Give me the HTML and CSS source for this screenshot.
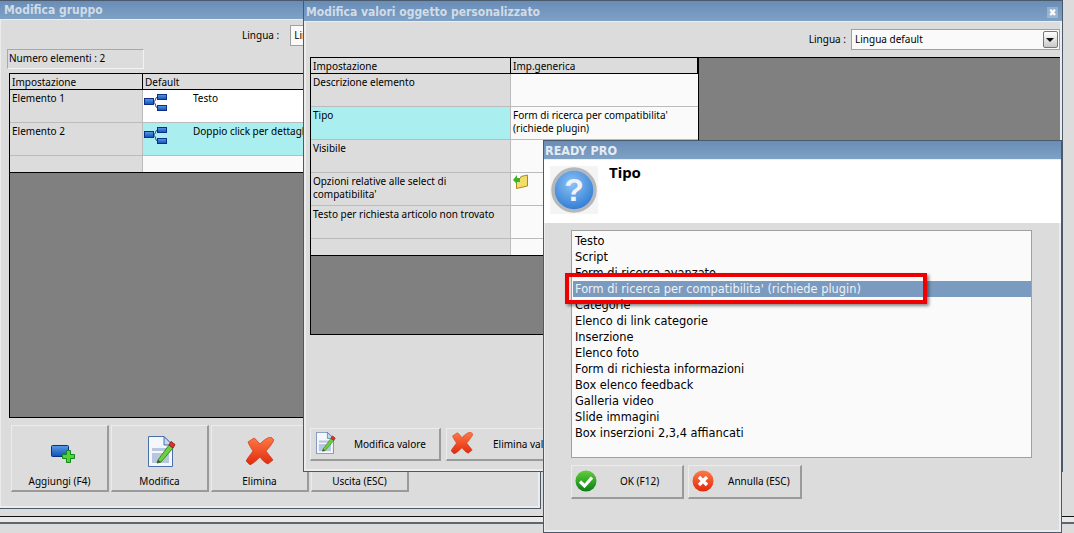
FILE: index.html
```html
<!DOCTYPE html>
<html lang="it">
<head>
<meta charset="utf-8">
<title>Ready Pro</title>
<link rel="stylesheet" href="styles.css">
</head>
<body>
<svg class="defs" width="0" height="0" aria-hidden="true">
  <defs>
    <linearGradient id="blue" x1="0" y1="0" x2="0" y2="1"><stop offset="0" stop-color="#5b9be8"/><stop offset="1" stop-color="#0f4fb5"/></linearGradient>
    <linearGradient id="redg" x1="0" y1="0" x2="0" y2="1"><stop offset="0" stop-color="#ff7a45"/><stop offset="1" stop-color="#e0290c"/></linearGradient>
    <linearGradient id="greeng" x1="0" y1="0" x2="0" y2="1"><stop offset="0" stop-color="#5fd03a"/><stop offset="1" stop-color="#0b7d16"/></linearGradient>
    <radialGradient id="qball" cx=".45" cy=".35" r=".75"><stop offset="0" stop-color="#8cc4f5"/><stop offset="1" stop-color="#1f6fce"/></radialGradient>
    <symbol id="tree" viewBox="0 0 23 17">
      <path d="M10 7.500 C12 7.500 11 3 13.500 3 M10 8.500 C12 8.500 11 14 13.500 14" fill="none" stroke="#2c3f78" stroke-width="1"/>
      <rect x=".5" y="4.500" width="9" height="6" fill="url(#blue)" stroke="#0b2f86"/>
      <rect x="13.500" y=".5" width="9" height="5" fill="url(#blue)" stroke="#0b2f86"/>
      <rect x="13.500" y="11.500" width="9" height="5" fill="url(#blue)" stroke="#0b2f86"/>
    </symbol>
    <symbol id="add" viewBox="0 0 25 20">
      <rect x=".5" y=".5" width="17" height="11" rx="1" fill="url(#blue)" stroke="#0b2f86"/>
      <path d="M15.500 5.500h4v4h4v4h-4v4h-4v-4h-4v-4h4z" fill="#57d13a" stroke="#118a1c"/>
    </symbol>
    <symbol id="edit" viewBox="0 0 28 31">
      <path d="M.5 .5H16L24.500 9V30.500H.5Z" fill="#f4f7fd" stroke="#4a70a8"/>
      <path d="M16 .5V9H24.500Z" fill="#c8d8f0" stroke="#4a70a8"/>
      <rect x="4" y="12" width="17" height="15" fill="#b9c6de"/>
      <rect x="4" y="15" width="13" height="2" fill="#f4f7fd"/>
      <path d="M10 24L21 9L25 12L13 26L9 27Z" fill="#6fd03f" stroke="#3b8a24"/>
      <path d="M21 9L23 5.500L27 8.500L25 12Z" fill="#d9352a" stroke="#93261c"/>
      <path d="M9 27L10 24L13 26Z" fill="#4b4b4b"/>
    </symbol>
    <symbol id="cross" viewBox="0 0 28 28">
      <path d="M2 5L8 1C10 2 12 5 14 7C17 4 20 1 25 0L28 3C26 7 23 11 20 14C22 17 25 20 27 23L22 27C19 26 16 23 14 20C11 23 8 26 4 28L0 24C2 20 5 17 7 14C5 11 3 8 2 5Z" fill="url(#redg)" stroke="#c4260c" stroke-width=".6"/>
    </symbol>
    <symbol id="ok" viewBox="0 0 22 22">
      <circle cx="11" cy="11" r="10.500" fill="url(#greeng)"/>
      <path d="M5 11.500L9.500 16L17 7.500" fill="none" stroke="#fff" stroke-width="3.200"/>
    </symbol>
    <symbol id="no" viewBox="0 0 22 22">
      <circle cx="11" cy="11" r="10.500" fill="url(#redg)"/>
      <path d="M7 7L15 15M15 7L7 15" fill="none" stroke="#fff" stroke-width="3.400"/>
    </symbol>
  </defs>
</svg>

<div class="strip"></div>

<section class="win win-group">
  <h1 class="title">Modifica gruppo</h1>
  <div class="body">
    <div class="lang lang-group">
      <span>Lingua :</span>
      <div class="select select-group">Lingua default</div>
    </div>
    <div class="count">Numero elementi : 2</div>
    <div class="grid-frame grid-frame-group">
      <div class="grid grid-group">
        <div class="cell head">Impostazione</div><div class="cell head">Default</div>
        <div class="cell name">Elemento 1</div>
        <div class="cell val treeval"><svg class="ic-tree"><use href="#tree"/></svg><span>Testo</span></div>
        <div class="cell name">Elemento 2</div>
        <div class="cell val treeval sel"><svg class="ic-tree"><use href="#tree"/></svg><span>Doppio click per dettagli</span></div>
        <div class="cell name last"></div><div class="cell val last"></div>
      </div>
    </div>
    <div class="bigbtns">
      <button class="bigbtn"><svg class="ic-add"><use href="#add"/></svg>Aggiungi (F4)</button>
      <button class="bigbtn"><svg class="ic-edit"><use href="#edit"/></svg>Modifica</button>
      <button class="bigbtn"><svg class="ic-cross"><use href="#cross"/></svg>Elimina</button>
      <button class="bigbtn bigbtn-text">Uscita (ESC)</button>
    </div>
  </div>
</section>

<section class="win win-values">
  <h1 class="title title-values">Modifica valori oggetto personalizzato<span class="close">✖</span></h1>
  <div class="body">
    <div class="lang lang-values">
      <span>Lingua :</span>
      <div class="select select-values">Lingua default<span class="drop"></span></div>
    </div>
    <div class="grid-frame grid-frame-values">
      <div class="grid grid-values">
        <div class="cell head">Impostazione</div><div class="cell head">Imp.generica</div>
        <div class="cell name">Descrizione elemento</div><div class="cell val"></div>
        <div class="cell name sel">Tipo</div><div class="cell val">Form di ricerca per compatibilita' (richiede plugin)</div>
        <div class="cell name">Visibile</div><div class="cell val"></div>
        <div class="cell name">Opzioni relative alle select di compatibilita'</div>
        <div class="cell val"><svg class="ic-folder" viewBox="0 0 15 15"><path d="M3.500 4.500H7L8 2.500L14.500 1V12L3.500 14.500Z" fill="#f2dc6a" stroke="#a88a1c"/><path d="M0 6L4 1V4H7V8H4V10Z" fill="#3fae2e"/></svg></div>
        <div class="cell name">Testo per richiesta articolo non trovato</div><div class="cell val"></div>
        <div class="cell name last"></div><div class="cell val last"></div>
      </div>
    </div>
    <div class="rowbtns rowbtns-values">
      <button class="btn btn-mod"><svg class="ic-edit-s"><use href="#edit"/></svg><span>Modifica valore</span></button>
      <button class="btn btn-del"><svg class="ic-cross-s"><use href="#cross"/></svg><span>Elimina valore</span></button>
    </div>
  </div>
</section>

<section class="win win-dialog">
  <h1 class="title title-dialog">READY PRO</h1>
  <div class="dialog-head">
    <svg class="ic-q" viewBox="0 0 48 48">
      <rect width="48" height="48" fill="#f4f4f4"/>
      <circle cx="24" cy="24" r="21" fill="url(#qball)" stroke="#b4b8bc" stroke-width="3.500"/>
      <text x="24" y="35" text-anchor="middle" class="qmark">?</text>
    </svg>
    <div class="dialog-title">Tipo</div>
  </div>
  <div class="dialog-body">
    <ul class="list">
      <li>Testo</li>
      <li>Script</li>
      <li>Form di ricerca avanzato</li>
      <li class="on">Form di ricerca per compatibilita' (richiede plugin)</li>
      <li>Categorie</li>
      <li>Elenco di link categorie</li>
      <li>Inserzione</li>
      <li>Elenco foto</li>
      <li>Form di richiesta informazioni</li>
      <li>Box elenco feedback</li>
      <li>Galleria video</li>
      <li>Slide immagini</li>
      <li>Box inserzioni 2,3,4 affiancati</li>
    </ul>
    <div class="rowbtns rowbtns-dialog">
      <button class="btn btn-ok"><svg class="ic-round"><use href="#ok"/></svg><span>OK (F12)</span></button>
      <button class="btn btn-no"><svg class="ic-round"><use href="#no"/></svg><span>Annulla (ESC)</span></button>
    </div>
  </div>
  <div class="marker"></div>
</section>
</body>
</html>
```
FILE: styles.css
```css
* { box-sizing: border-box; }
html, body { margin: 0; height: 100%; }
body {
  position: relative;
  width: 1074px;
  height: 533px;
  overflow: hidden;
  background: #dcdcdc;
  font: 10px/13px "Noto Sans", "Liberation Sans", sans-serif;
  color: #000;
}
.defs { position: absolute; }
.strip {
  position: absolute;
  left: 0; right: 0; top: 516px; height: 8px;
  border-top: 1px solid #111;
  border-bottom: 2px solid #5e6670;
  background: #e9e9e9;
}
.win {
  position: absolute;
  display: flex;
  flex-direction: column;
  background: #dcdcdc;
  border: 1px solid #4a5a6a;
}
.win-group { left: -2px; top: 0; width: 543px; height: 509px; }
.win-values { left: 303px; top: 0; width: 760px; height: 472px; }
.win-dialog { left: 543px; top: 140px; width: 519px; height: 393px; }
.title {
  margin: 0;
  height: 19px;
  padding: 2px 0 0 5px;
  flex: none;
  display: flex;
  justify-content: space-between;
  background: linear-gradient(#688db7, #7fa1c5);
  border-bottom: 1px solid #e8eef4;
  color: #d0dce8;
  font: bold 12px/15px "DejaVu Sans Condensed", "Liberation Sans", sans-serif;
}
.title-values { height: 21px; padding-top: 4px; padding-left: 2px; }
.title-dialog { padding-left: 1px; color: #e4ecf4; font-size: 12.500px; }
.close {
  width: 11px;
  height: 11px;
  margin: 2px 4px 0 0;
  background: rgba(255, 255, 255, .25);
  color: #fff;
  font-size: 10px;
  line-height: 11px;
  text-align: center;
}
.body {
  flex: 1;
  min-height: 0;
  border: 2px solid #ececec;
  border-top: 0;
  position: relative;
  overflow: hidden;
}
.lang {
  display: flex;
  align-items: center;
  justify-content: flex-end;
  gap: 11px;
  height: 20px;
}
.lang-group { margin-top: 5px; justify-content: flex-start; padding-left: 241px; }
.lang-values { margin-top: 7px; padding-right: 0; gap: 5px; }
.select {
  height: 21px;
  flex: none;
  position: relative;
  padding: 3px 0 0 3px;
  background: #fafafa;
  border: 1px solid #a0a0a0;
}
.select-group { width: 240px; }
.select-values { width: 209px; }
.drop {
  position: absolute;
  right: 1px; top: 1px;
  width: 15px; height: 17px;
  border: 1px solid #777;
  border-radius: 2px;
  background: linear-gradient(#fff, #c9c9c9);
}
.drop::after {
  content: "";
  position: absolute;
  left: 2px; top: 6px;
  border: 4px solid transparent;
  border-top: 4px solid #111;
  border-bottom: 0;
}
.count {
  width: 137px;
  height: 20px;
  margin: 4px 0 0 6px;
  padding: 2px 0 0 1px;
  border: 1px solid #a8a8a8;
  border-right-color: #f2f2f2;
  border-bottom-color: #f2f2f2;
}
.grid-frame {
  background: #808080;
  border: 1px solid #000;
  overflow: hidden;
}
.grid-frame-group { margin: 4px 0 0 8px; width: 560px; height: 345px; }
.grid-frame-values { margin: 8px 0 0 4px; width: 751px; height: 278px; }
.grid {
  display: grid;
  background: #000;
  border-right: 1px solid #000;
  border-bottom: 1px solid #000;
}
.grid-group { grid-template-columns: 133px 1fr; grid-template-rows: 16px 33px 33px 16px; }
.grid-values { width: 388px; grid-template-columns: 200px 1fr; grid-template-rows: 16px 33px 33px 33px 33px 33px 16px; }
.cell {
  padding: 2px 2px 0;
  border-right: 1px solid #bbb;
  border-bottom: 1px solid #bbb;
  overflow: hidden;
}
.head {
  background: #dcdcdc;
  border-right-color: #000;
  border-bottom: 1px solid #000;
}
.name { background: #dcdcdc; }
.val { background: #fff; border-right: 0; padding-right: 20px; }
.grid-values .val { background: #fafafa; }
.grid-group .last { background: #dcdcdc; }
.grid-group .val.last, .grid-values .val.last { background: #fafafa; }
.last { border-bottom: 0; }
.cell.sel { background: #aaeeef; }
.treeval {
  display: flex;
  padding-left: 1px;
  padding-top: 2px;
  white-space: nowrap;
}
.treeval span { margin-left: 26px; }
.ic-tree { width: 23px; height: 17px; margin-top: 2px; flex: none; }
.ic-folder { display: block; width: 15px; height: 15px; margin-top: -1px; }
.bigbtns {
  display: flex;
  gap: 2px;
  margin: 7px 0 0 10px;
}
.bigbtn {
  width: 98px;
  height: 67px;
  padding: 0;
  position: relative;
  display: flex;
  flex-direction: column;
  align-items: center;
  justify-content: flex-end;
  padding-bottom: 2px;
  background: #dcdcdc;
  border: 1px solid #ececec;
  border-right: 2px solid #9a9a9a;
  border-bottom: 2px solid #9a9a9a;
  font: inherit;
}
.ic-add { position: absolute; left: 39px; top: 19px; width: 25px; height: 20px; }
.ic-edit { position: absolute; left: 36px; top: 10px; width: 28px; height: 31px; }
.ic-cross { position: absolute; left: 34px; top: 11px; width: 28px; height: 28px; }
.rowbtns { display: flex; }
.rowbtns-values { position: absolute; left: 4px; bottom: 8px; gap: 5px; }
.btn {
  position: relative;
  flex: none;
  display: flex;
  align-items: center;
  padding: 0;
  background: #dcdcdc;
  border: 1px solid #ececec;
  border-right: 2px solid #9a9a9a;
  border-bottom: 2px solid #9a9a9a;
  font: inherit;
  white-space: nowrap;
}
.btn-mod { width: 131px; height: 33px; }
.btn-del { width: 131px; height: 33px; }
.btn-mod span { margin-left: 43px; }
.btn-del span { margin-left: 46px; }
.ic-edit-s { position: absolute; left: 5px; top: 3px; width: 20px; height: 22px; }
.ic-cross-s { position: absolute; left: 4px; top: 3px; width: 22px; height: 22px; }
.dialog-head {
  flex: none;
  height: 63px;
  padding: 6px 0 0 6px;
  display: flex;
  background: #fff;
}
.ic-q { width: 48px; height: 48px; flex: none; }
.qmark { font: bold 32px "Liberation Sans", sans-serif; fill: #f2f2fa; }
.dialog-title {
  margin: -2px 0 0 11px;
  font: bold 15px/17px "Noto Sans", "Liberation Sans", sans-serif;
}
.dialog-body {
  flex: 1;
  padding: 7px 0 0 26px;
  border: 2px solid #ececec;
  border-top: 0;
  border-left-width: 1px;
}
.list {
  width: 461px;
  height: 228px;
  margin: 0;
  padding: 2px 0 2px 1px;
  list-style: none;
  background: #fafafa;
  border: 1px solid #a0a0a0;
  font: 11.400px/16px "DejaVu Sans", sans-serif;
}
.list li { padding-left: 2px; white-space: nowrap; }
.list .on { background: #7b9abf; color: #eef2f6; }
.rowbtns-dialog { gap: 4px; margin-top: 7px; }
.btn-ok { width: 113px; height: 34px; }
.btn-no { width: 114px; height: 34px; }
.btn-ok span { margin-left: 48px; }
.btn-no span { margin-left: 39px; }
.ic-round { position: absolute; left: 3px; top: 4px; width: 22px; height: 22px; }
.marker {
  position: absolute;
  left: 21px; top: 132px;
  width: 362px; height: 31px;
  border: 4px solid #ee0000;
  box-shadow: 2px 2px 3px rgba(0, 0, 0, .45);
}
```
